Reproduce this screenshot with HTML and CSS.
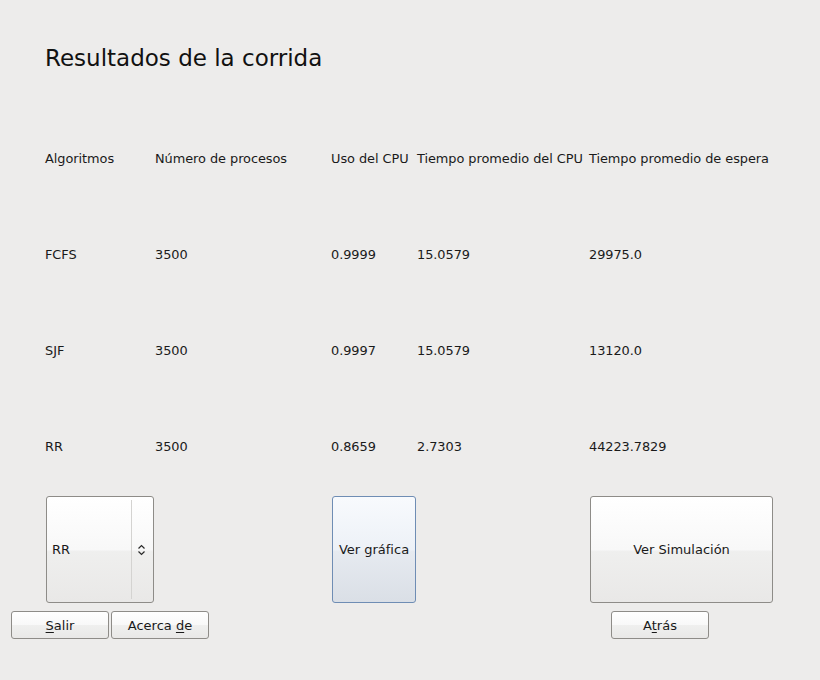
FILE: index.html
```html
<!DOCTYPE html>
<html lang="es">
<head>
<meta charset="utf-8">
<title>Resultados de la corrida</title>
<link rel="stylesheet" href="styles.css">
</head>
<body>
<div class="window">
  <div class="title-row"><h1 class="title">Resultados de la corrida</h1></div>
  <div class="table">
    <div class="cell">Algoritmos</div>
    <div class="cell">Número de procesos</div>
    <div class="cell">Uso del CPU</div>
    <div class="cell">Tiempo promedio del CPU</div>
    <div class="cell">Tiempo promedio de espera</div>

    <div class="cell">FCFS</div>
    <div class="cell">3500</div>
    <div class="cell">0.9999</div>
    <div class="cell">15.0579</div>
    <div class="cell">29975.0</div>

    <div class="cell">SJF</div>
    <div class="cell">3500</div>
    <div class="cell">0.9997</div>
    <div class="cell">15.0579</div>
    <div class="cell">13120.0</div>

    <div class="cell">RR</div>
    <div class="cell">3500</div>
    <div class="cell">0.8659</div>
    <div class="cell">2.7303</div>
    <div class="cell">44223.7829</div>

    <div class="ctl c1">
      <div class="combo">
        <span class="combo-text">RR</span>
        <span class="combo-sep"></span>
        <svg class="combo-arrow" width="9" height="12" viewBox="0 0 9 12"><path d="M1.5 4.5 L4.5 1.5 L7.5 4.5 M1.5 7.5 L4.5 10.5 L7.5 7.5" fill="none" stroke="#2a2a2a" stroke-width="1.2"/></svg>
      </div>
    </div>
    <div class="ctl c3"><button class="btn big focus">Ver gráfica</button></div>
    <div class="ctl c5"><button class="btn big">Ver Simulación</button></div>
  </div>
  <div class="bottom">
    <button class="btn small"><u>S</u>alir</button>
    <button class="btn small">Acerca <u>d</u>e</button>
    <button class="btn small atras">A<u>t</u>rás</button>
  </div>
</div>
</body>
</html>
```
FILE: styles.css
```css
html, body {
  margin: 0;
  padding: 0;
  background: #edeceb;
}
body {
  width: 820px;
  height: 680px;
  font-family: "DejaVu Sans", sans-serif;
  font-size: 13px;
  color: #1a1a1a;
}
.window {
  display: flex;
  flex-direction: column;
}
.title-row {
  height: 111px;
  padding-left: 45px;
  box-sizing: border-box;
  padding-top: 44px;
}
.title {
  margin: 0;
  font-weight: normal;
  font-size: 23px;
  line-height: 28px;
  color: #111;
}
.table {
  display: grid;
  padding-left: 45px;
  grid-template-columns: 110px 176px 86px 172px 185px;
  grid-template-rows: 96px 96px 96px 96px 111px;
  margin-top: -1px;
}
.cell {
  display: flex;
  align-items: center;
  white-space: nowrap;
  line-height: 16px;
  padding-top: 2px;
  font-size: 12.9px;
  letter-spacing: -0.05px;
}
.ctl {
  padding: 2px 1px;
  display: flex;
}
.c1 { grid-column: 1; }
.c3 { grid-column: 3; }
.c5 { grid-column: 5; }
.btn {
  font-family: "DejaVu Sans", sans-serif;
  font-size: 13px;
  color: #1a1a1a;
  border: 1px solid #8e8c88;
  border-radius: 3px;
  background: linear-gradient(#ffffff 0%, #f8f8f8 50%, #efefee 52%, #e9e8e7 100%);
  padding: 0;
  margin: 0;
}
.big {
  flex: 1;
}
.focus {
  border-color: #6f8db4;
  background: linear-gradient(#f8fafd 0%, #edf1f7 50%, #e6eaf0 52%, #dadfe6 100%);
}
.combo {
  flex: 1;
  display: flex;
  align-items: center;
  border: 1px solid #8e8c88;
  border-radius: 3px;
  background: linear-gradient(#ffffff 0%, #f8f8f8 50%, #efefee 52%, #e9e8e7 100%);
}
.combo-text {
  flex: 1;
  padding-left: 5px;
}
.combo-sep {
  align-self: stretch;
  width: 1px;
  background: #d4d3d1;
  margin: 3px 0;
}
.combo-arrow {
  margin: 0 7px 0 5px;
}
.bottom {
  display: grid;
  grid-template-columns: 98px 98px 398px 98px;
  column-gap: 2px;
  padding-left: 11px;
  padding-top: 6px;
}
.small {
  height: 28px;
}
.atras {
  grid-column: 4;
}
u {
  text-decoration: underline;
  text-underline-offset: 2px;
}
```
